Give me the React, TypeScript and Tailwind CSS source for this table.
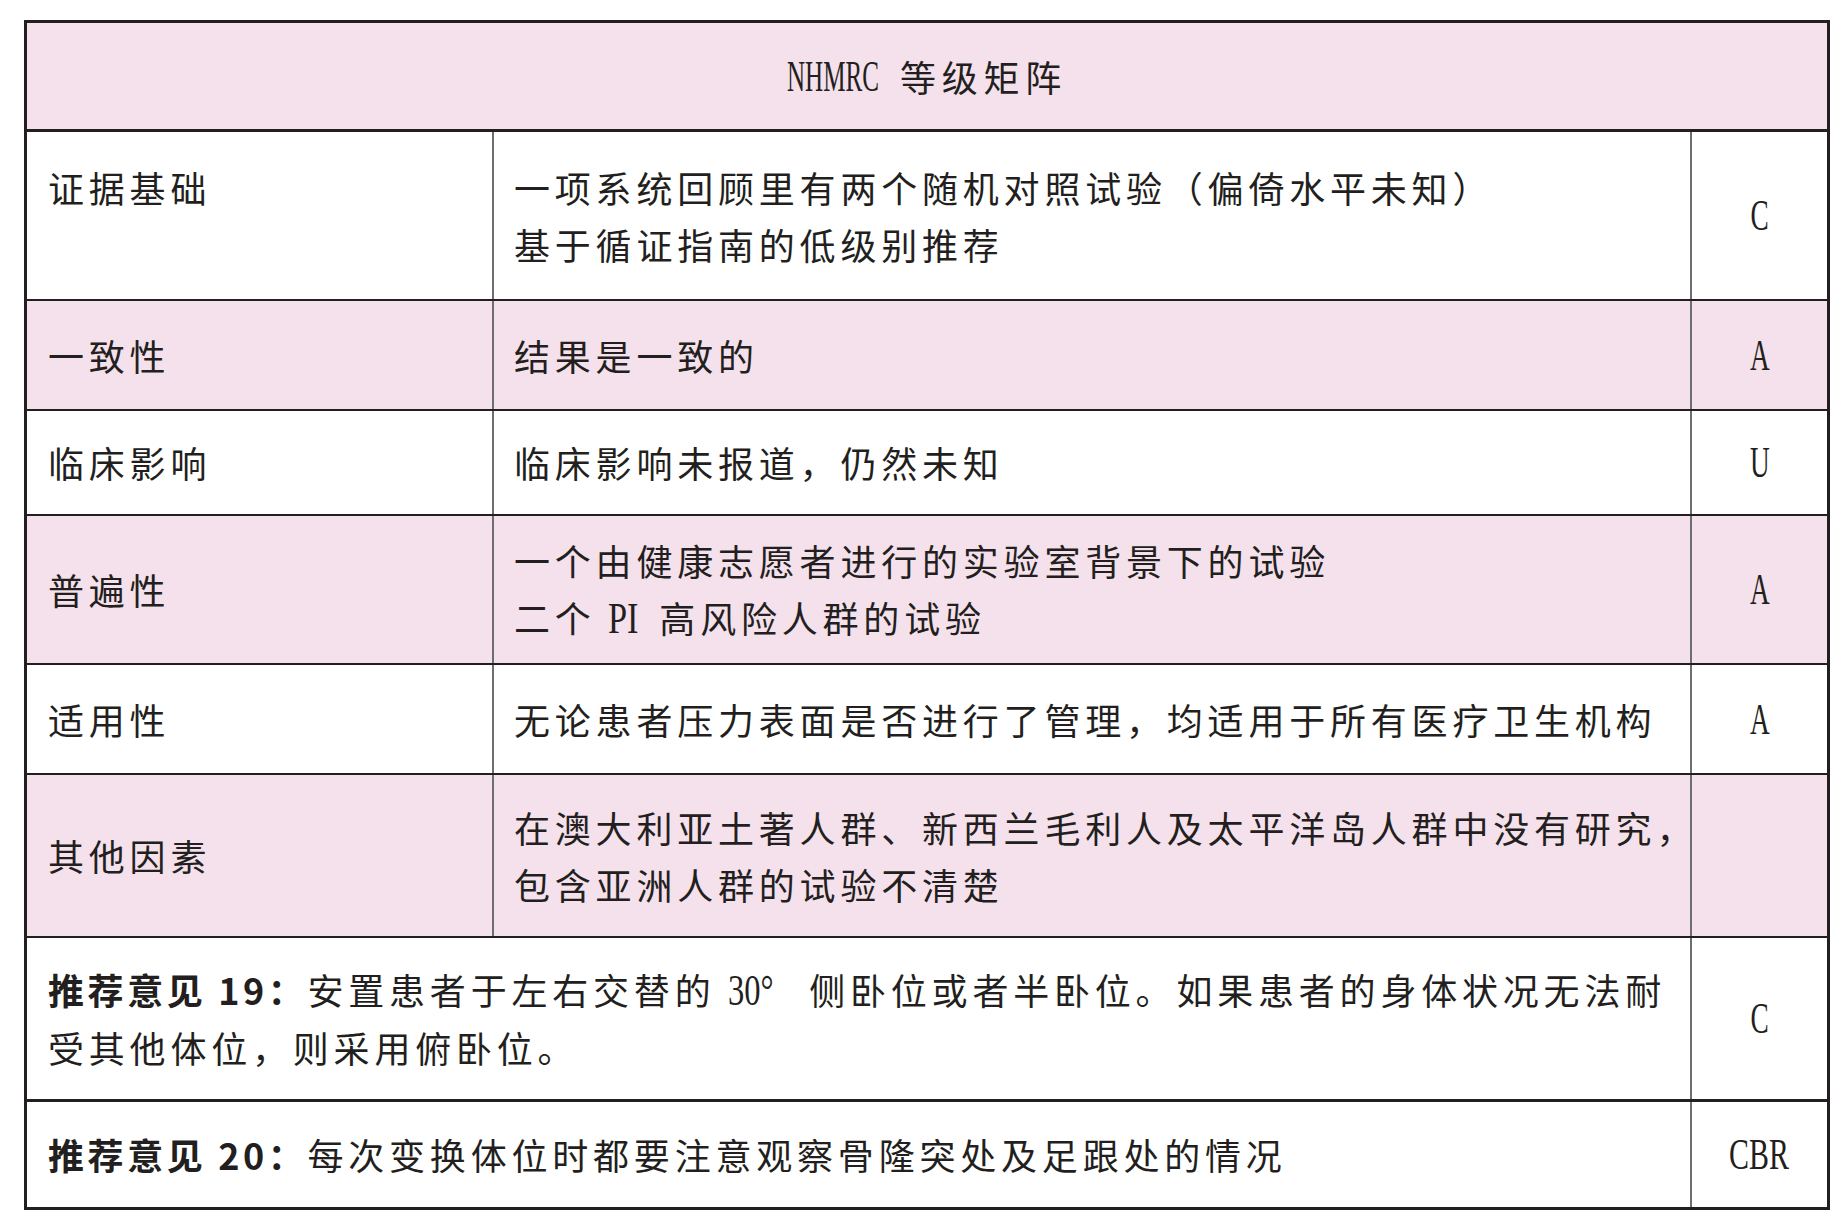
import type { ReactNode } from "react";

const ink = "text-[#231f20]";

function Latin({ children, w, s = "scale-x-[0.62]" }: { children: ReactNode; w?: string; s?: string }) {
  // condensed serif for Latin letters (grades, NHMRC, PI, 30°)
  if (w) {
    return (
      <span className={`inline-block whitespace-nowrap align-baseline ${w}`}>
        <span className={`inline-block origin-left ${s} font-['Liberation_Serif'] text-[44px] tracking-normal`}>
          {children}
        </span>
      </span>
    );
  }
  return (
    <span className={`inline-block ${s} font-['Liberation_Serif'] text-[44px] tracking-normal`}>
      {children}
    </span>
  );
}

interface Row {
  label: string;
  lines: ReactNode[];
  grade: string;
  pink?: boolean;
  h: string;
  labelTop?: boolean;
}

const rows: Row[] = [
  {
    label: "证据基础",
    lines: ["一项系统回顾里有两个随机对照试验（偏倚水平未知）", "基于循证指南的低级别推荐"],
    grade: "C",
    h: "h-[169px]",
    labelTop: true,
  },
  { label: "一致性", lines: ["结果是一致的"], grade: "A", pink: true, h: "h-[110px]" },
  { label: "临床影响", lines: ["临床影响未报道，仍然未知"], grade: "U", h: "h-[105px]" },
  {
    label: "普遍性",
    lines: [
      "一个由健康志愿者进行的实验室背景下的试验",
      <>
        二个 <Latin w="w-[38px]" s="scale-x-[0.78]">PI</Latin> 高风险人群的试验
      </>,
    ],
    grade: "A",
    pink: true,
    h: "h-[149px]",
  },
  {
    label: "适用性",
    lines: ["无论患者压力表面是否进行了管理，均适用于所有医疗卫生机构"],
    grade: "A",
    h: "h-[110px]",
  },
  {
    label: "其他因素",
    lines: ["在澳大利亚土著人群、新西兰毛利人及太平洋岛人群中没有研究，", "包含亚洲人群的试验不清楚"],
    grade: "",
    pink: true,
    h: "h-[163px]",
  },
];

export default function App() {
  return (
    <div
      className={`min-h-screen bg-white pt-[20px] pl-[24px] ${ink} font-['Noto_Sans_CJK_SC',sans-serif] text-[36px] leading-[57px] tracking-[4.8px]`}
    >
      <div className="w-[1806px] border-[3px] border-[#231f20]">
        {/* 表头 */}
        <div className="flex h-[109px] items-center justify-center border-b-[3px] border-[#231f20] bg-[#f5e1ec] tracking-[5.8px]">
          <Latin w="w-[113px]" s="scale-x-[0.57]">NHMRC</Latin>
          <span>等级矩阵</span>
        </div>

        {rows.map((r) => (
          <div
            key={r.label}
            className={`flex ${r.h} border-b-2 border-[#231f20] ${r.pink ? "bg-[#f5e1ec]" : "bg-white"}`}
          >
            <div
              className={`flex w-[467px] shrink-0 border-r-2 border-[#6d6e71] pl-[21px] whitespace-nowrap ${
                r.labelTop ? "items-start pt-[27px]" : "items-center"
              }`}
            >
              {r.label}
            </div>
            <div className="flex w-[1198px] shrink-0 flex-col justify-center border-r-2 border-[#6d6e71] pl-[20px] whitespace-nowrap">
              {r.lines.map((l, i) => (
                <div key={i}>{l}</div>
              ))}
            </div>
            <div className="flex flex-1 items-center justify-center">
              {r.grade && <Latin>{r.grade}</Latin>}
            </div>
          </div>
        ))}

        {/* 推荐意见 19 */}
        <div className="flex h-[164px] border-b-[3px] border-[#231f20] bg-white">
          <div className="flex w-[1665px] shrink-0 flex-col justify-center border-r-2 border-[#6d6e71] pl-[21px] whitespace-nowrap">
            <div>
              <span className="font-bold tracking-[3.6px]">推荐意见 19：</span>
              安置患者于左右交替的 <Latin w="w-[68px]" s="scale-x-[0.74]">30°</Latin> 侧卧位或者半卧位。如果患者的身体状况无法耐
            </div>
            <div>受其他体位，则采用俯卧位。</div>
          </div>
          <div className="flex flex-1 items-center justify-center">
            <Latin>C</Latin>
          </div>
        </div>

        {/* 推荐意见 20 */}
        <div className="flex h-[105px] bg-white">
          <div className="flex w-[1665px] shrink-0 items-center border-r-2 border-[#6d6e71] pl-[21px] whitespace-nowrap">
            <span className="font-bold tracking-[3.6px]">推荐意见 20：</span>
            每次变换体位时都要注意观察骨隆突处及足跟处的情况
          </div>
          <div className="flex flex-1 items-center justify-center">
            <Latin s="scale-x-[0.68]">CBR</Latin>
          </div>
        </div>
      </div>
    </div>
  );
}
